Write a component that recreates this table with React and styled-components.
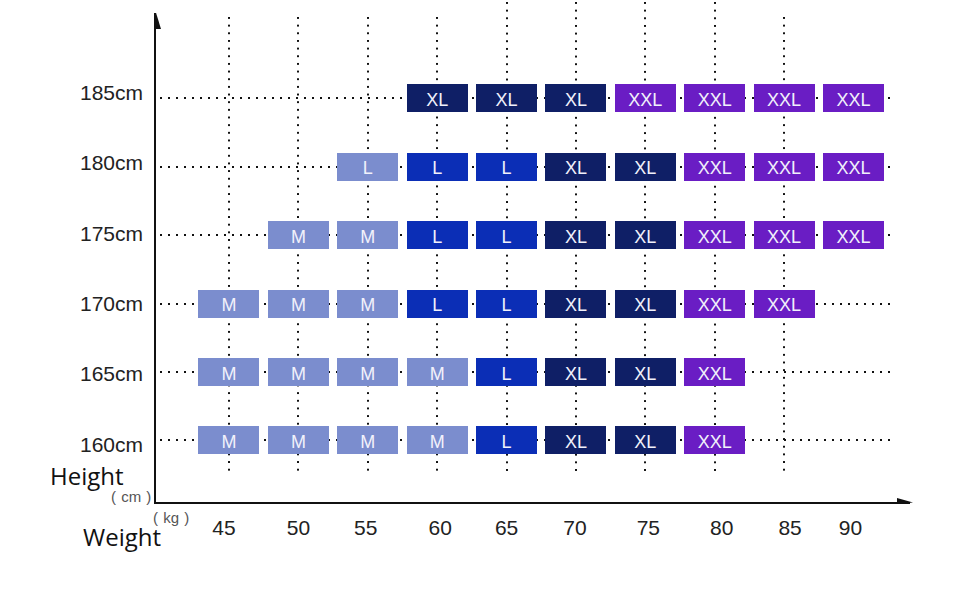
import styled, { createGlobalStyle } from "styled-components";

const COL = 69.4;
const ROW = 68.4;

const TONES = {
    light: "#7b8dce",
    blue: "#0b2eb6",
    navy: "#0f1f66",
    purple: "#6a1dc4",
};

const WEIGHTS = [45, 50, 55, 60, 65, 70, 75, 80, 85, 90];
// the printed numbers don't sit exactly under their columns
const TICK_SHIFT = [-5, 0, -2, 3, 0, -1, 3, 7, 6, -3];

const M = ["M", "light"];
const LL = ["L", "light"];
const L = ["L", "blue"];
const XL = ["XL", "navy"];
const XXL = ["XXL", "purple"];

const ROWS = [
    { label: "185cm", from: 3, cells: [XL, XL, XL, XXL, XXL, XXL, XXL] },
    { label: "180cm", from: 2, cells: [LL, L, L, XL, XL, XXL, XXL, XXL] },
    { label: "175cm", from: 1, cells: [M, M, L, L, XL, XL, XXL, XXL, XXL] },
    { label: "170cm", from: 0, cells: [M, M, M, L, L, XL, XL, XXL, XXL] },
    { label: "165cm", from: 0, cells: [M, M, M, M, L, XL, XL, XXL] },
    { label: "160cm", from: 0, cells: [M, M, M, M, L, XL, XL, XXL] },
];

const GlobalStyle = createGlobalStyle`
    body {
        margin: 0;
        background: #fff;
        font-family: "Liberation Sans", Arial, sans-serif;
    }
`;

const Chart = styled.div`
    display: grid;
    grid-template-columns: 154px 756px;
    grid-template-rows: 489px auto;
    width: 960px;
    height: 600px;
    padding-top: 15px;
    box-sizing: border-box;
    overflow: hidden;
`;

const YLabels = styled.div`
    display: flex;
    flex-direction: column;
    padding-top: 42.5px;
`;

const YLabel = styled.div`
    height: 70.3px;
    display: flex;
    align-items: center;
    justify-content: flex-end;
    padding-right: 11px;
    font-size: 21px;
    line-height: 21px;
    color: #222;
`;

const AxisTitle = styled.div`
    margin-left: ${(p) => p.$indent}px;
    margin-top: ${(p) => p.$offset}px;
    font-family: "Open Sans", "Noto Sans", sans-serif;
    font-size: 24px;
    line-height: 24px;
    color: #111;
`;

const Unit = styled.div`
    margin-left: ${(p) => p.$indent}px;
    margin-top: ${(p) => p.$offset || 0}px;
    font-size: 15px;
    line-height: 15px;
    word-spacing: 1px;
    color: #555;
`;

const Plot = styled.div`
    position: relative;
    display: grid;
    grid-template-columns: 38.3px repeat(10, ${COL}px) 1fr;
    grid-template-rows: 49.3px repeat(6, ${ROW}px) 1fr;
    border-left: 2px solid #111;
    border-bottom: 2px solid #111;

    &::before {
        content: "";
        position: absolute;
        left: -2px;
        top: -2px;
        width: 7px;
        height: 16px;
        background: #111;
        clip-path: polygon(0 0, 30% 0, 100% 100%, 0 100%);
    }

    &::after {
        content: "";
        position: absolute;
        right: -3px;
        bottom: -2px;
        width: 16px;
        height: 6px;
        background: #111;
        clip-path: polygon(0 0, 100% 75%, 0 100%);
    }
`;

const VLine = styled.div`
    grid-column: ${(p) => p.$col + 2};
    grid-row: 1 / 8;
    justify-self: center;
    width: 2px;
    margin-top: ${(p) => (p.$rise ? -13 : 2)}px;
    background-image: linear-gradient(to bottom, #111 2px, transparent 2px);
    background-size: 2px 7.67px;
`;

const HLine = styled.div`
    grid-column: 1 / -1;
    grid-row: ${(p) => p.$row + 2};
    align-self: center;
    height: 2px;
    margin: 0 17px 0 4px;
    background-image: linear-gradient(to right, #111 2px, transparent 2px);
    background-size: 8px 2px;
    background-repeat: repeat-x;
`;

const Cell = styled.div`
    grid-column: ${(p) => p.$col + 2};
    grid-row: ${(p) => p.$row + 2};
    justify-self: center;
    align-self: center;
    width: 61px;
    height: 28px;
    box-sizing: border-box;
    padding-top: 3px;
    display: flex;
    align-items: center;
    justify-content: center;
    background: ${(p) => TONES[p.$tone]};
    color: #f1f1fb;
    font-size: 18px;
    line-height: 1;
`;

const XAxis = styled.div`
    grid-column: 1 / -1;
    display: grid;
    grid-template-columns: 194.3px repeat(10, ${COL}px);
    align-items: start;
`;

const UnitBlock = styled.div`
    display: flex;
    flex-direction: column;
    align-items: flex-start;
    margin-top: 6px;
`;

const XTick = styled.div`
    margin-top: 13px;
    text-align: center;
    font-size: 21px;
    line-height: 21px;
    color: #222;
    transform: translateX(${(p) => p.$dx}px);
`;

const App = () => {
    return (
        <>
            <GlobalStyle />
            <Chart>
                <YLabels>
                    {ROWS.map((row) => (
                        <YLabel key={row.label}>{row.label}</YLabel>
                    ))}
                    <AxisTitle $indent={50} $offset={-15.7}>
                        Height
                    </AxisTitle>
                    <Unit $indent={111} $offset={1}>
                        ( cm )
                    </Unit>
                </YLabels>

                <Plot>
                    {WEIGHTS.slice(0, 9).map((w, i) => (
                        <VLine key={w} $col={i} $rise={i >= 4 && i <= 7} />
                    ))}
                    {ROWS.map((row, r) => (
                        <HLine key={row.label} $row={r} />
                    ))}
                    {ROWS.map((row, r) =>
                        row.cells.map(([size, tone], i) => (
                            <Cell
                                key={row.label + i}
                                $row={r}
                                $col={row.from + i}
                                $tone={tone}
                            >
                                {size}
                            </Cell>
                        ))
                    )}
                </Plot>

                <XAxis>
                    <UnitBlock>
                        <Unit $indent={153}>( kg )</Unit>
                        <AxisTitle $indent={83} $offset={0.3}>
                            Weight
                        </AxisTitle>
                    </UnitBlock>
                    {WEIGHTS.map((w, i) => (
                        <XTick key={w} $dx={TICK_SHIFT[i]}>
                            {w}
                        </XTick>
                    ))}
                </XAxis>
            </Chart>
        </>
    );
};

export default App;
